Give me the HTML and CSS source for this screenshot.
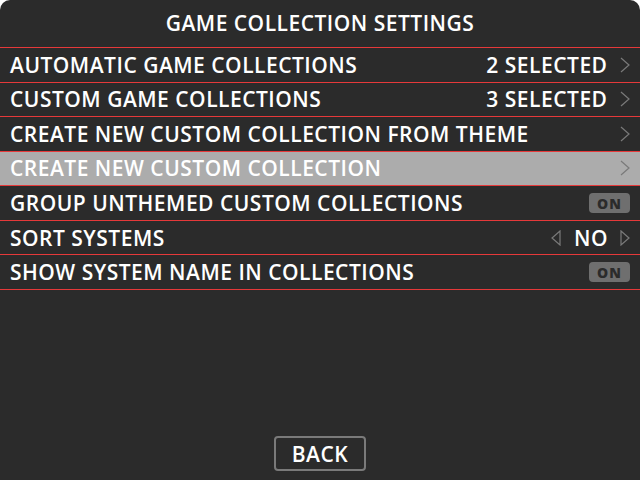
FILE: index.html
```html
<!DOCTYPE html>
<html>
<head>
<meta charset="utf-8">
<link rel="stylesheet" href="styles.css">
</head>
<body>
<div class="panel">
  <div class="title">GAME COLLECTION SETTINGS</div>
  <div class="list">
    <div class="row"><span class="label">AUTOMATIC GAME COLLECTIONS</span><span class="value">2 SELECTED</span><svg class="chev" viewBox="0 0 10 16"><path d="M1 1 L9 8 L1 15" /></svg></div>
    <div class="row"><span class="label">CUSTOM GAME COLLECTIONS</span><span class="value">3 SELECTED</span><svg class="chev" viewBox="0 0 10 16"><path d="M1 1 L9 8 L1 15" /></svg></div>
    <div class="row"><span class="label">CREATE NEW CUSTOM COLLECTION FROM THEME</span><svg class="chev" viewBox="0 0 10 16"><path d="M1 1 L9 8 L1 15" /></svg></div>
    <div class="row selected"><span class="label">CREATE NEW CUSTOM COLLECTION</span><svg class="chev" viewBox="0 0 10 16"><path d="M1 1 L9 8 L1 15" /></svg></div>
    <div class="row"><span class="label">GROUP UNTHEMED CUSTOM COLLECTIONS</span><span class="toggle">ON</span></div>
    <div class="row"><span class="label">SORT SYSTEMS</span><svg class="tri" viewBox="0 0 10 16"><path d="M9 1 L1 8 L9 15 Z" /></svg><span class="value no">NO</span><svg class="tri" viewBox="0 0 10 16"><path d="M1 1 L9 8 L1 15 Z" /></svg></div>
    <div class="row"><span class="label">SHOW SYSTEM NAME IN COLLECTIONS</span><span class="toggle">ON</span></div>
  </div>
  <div class="spacer"></div>
  <div class="footer"><div class="back">BACK</div></div>
</div>
</body>
</html>
```
FILE: styles.css
```css
html, body {
  margin: 0;
  padding: 0;
  background: #ffffff;
}
body {
  width: 640px;
  height: 480px;
  overflow: hidden;
  font-family: "Open Sans", "Liberation Sans", sans-serif;
}
.panel {
  width: 640px;
  height: 480px;
  background: #2b2b2b;
  border-radius: 10px 10px 0 0;
  display: flex;
  flex-direction: column;
  color: #ffffff;
}
.title {
  height: 47px;
  display: flex;
  align-items: center;
  justify-content: center;
  font-size: 21px;
  font-weight: 600;
  letter-spacing: 0.5px;
  padding-bottom: 2px;
  box-sizing: border-box;
}
.list {
  border-top: 1px solid #e6393a;
}
.row {
  height: 34.57px;
  box-sizing: border-box;
  border-bottom: 1px solid #e6393a;
  display: flex;
  align-items: center;
  padding: 0 10px 0 10px;
  font-size: 21px;
  font-weight: 600;
  letter-spacing: 0.5px;
}
.row.selected {
  background: #acacac;
}
.label {
  flex: 1;
  white-space: nowrap;
}
.value {
  white-space: nowrap;
  margin-right: -0.5px;
}
.chev {
  width: 10px;
  height: 16px;
  margin-left: 13px;
  fill: none;
  stroke: #7a7a7a;
  stroke-width: 1.2;
}
.tri {
  width: 10px;
  height: 16px;
  fill: none;
  stroke: #7a7a7a;
  stroke-width: 1.2;
}
.no {
  margin: 0 12px 0 13px;
}
.toggle {
  width: 41px;
  height: 20px;
  border-radius: 4px;
  background: #6f6f6f;
  color: #2b2b2b;
  font-size: 14px;
  font-weight: 800;
  display: flex;
  align-items: center;
  justify-content: center;
  letter-spacing: 1px;
}
.spacer {
  flex: 1;
}
.footer {
  display: flex;
  justify-content: center;
  padding-bottom: 9px;
}
.back {
  width: 92px;
  height: 35px;
  box-sizing: border-box;
  border: 2px solid #7a7a7a;
  border-radius: 4px;
  display: flex;
  align-items: center;
  justify-content: center;
  font-size: 21px;
  font-weight: 600;
  letter-spacing: 0.5px;
}
```
